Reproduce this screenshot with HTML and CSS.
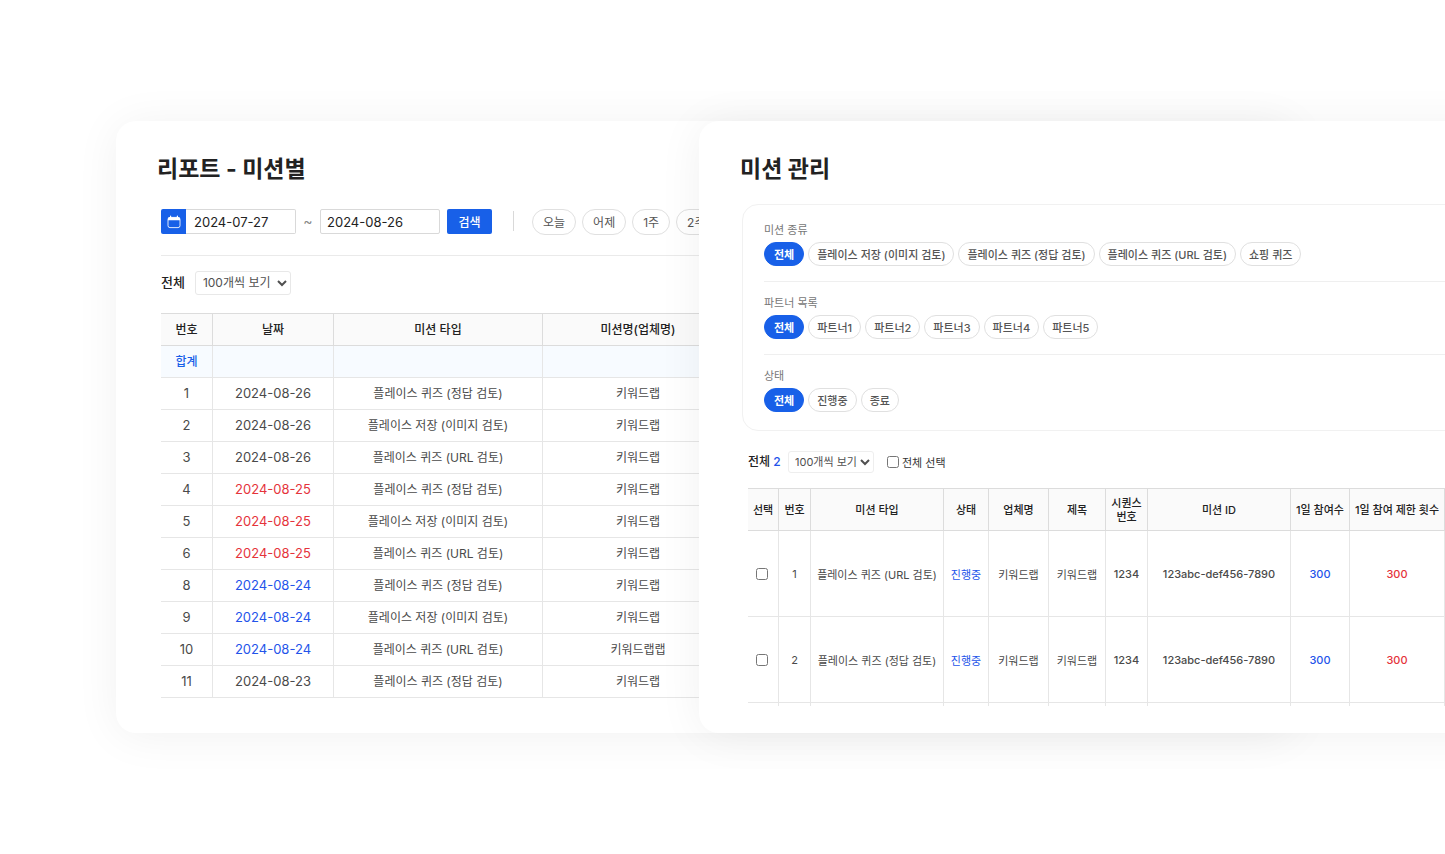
FILE: index.html
```html
<!DOCTYPE html>
<html lang="ko">
<head>
<meta charset="utf-8">
<meta name="viewport" content="width=device-width, initial-scale=1">
<title>리포트 / 미션 관리</title>
<link rel="stylesheet" href="styles.css">
</head>
<body>
<main class="stage">
  <section class="card card-report">
    <h1 class="card-title">리포트 - 미션별</h1>
    <div class="report-body">
      <form class="search-row">
        <div class="date-field">
          <button type="button" class="date-icon" aria-label="달력 열기">
            <svg width="14" height="14" viewBox="0 0 14 14" fill="none" aria-hidden="true">
              <path d="M1 5.2V3.6Q1 2.2 2.4 2.2H11.6Q13 2.2 13 3.6V5.2Z" fill="#fff"/>
              <path d="M3.6 1.2V2.6M10.4 1.2V2.6" stroke="#fff" stroke-width="1.2" stroke-linecap="round"/>
              <rect x="1" y="2.4" width="12" height="10.2" rx="2" stroke="#fff" stroke-opacity=".85"/>
            </svg>
          </button>
          <input type="text" class="date-input date-start" value="2024-07-27" aria-label="시작일">
        </div>
        <span class="tilde">~</span>
        <input type="text" class="date-input date-end" value="2024-08-26" aria-label="종료일">
        <button type="button" class="search-btn">검색</button>
        <span class="divider"></span>
        <div class="range-chips">
          <button type="button" class="chip chip-lg">오늘</button>
          <button type="button" class="chip chip-lg">어제</button>
          <button type="button" class="chip chip-lg">1주</button>
          <button type="button" class="chip chip-lg">2주</button>
        </div>
      </form>
      <div class="list-head">
        <label class="total" for="report-size">전체</label>
        <select id="report-size" class="page-size"><option>100개씩 보기</option></select>
      </div>
      <table class="grid report-grid">
        <colgroup><col class="r-no"><col class="r-date"><col class="r-type"><col class="r-name"></colgroup>
        <thead><tr><th>번호</th><th>날짜</th><th>미션 타입</th><th>미션명(업체명)</th></tr></thead>
        <tbody>
          <tr class="sum"><td>합계</td><td></td><td></td><td></td></tr>
          <tr><td class="num">1</td><td class="num">2024-08-26</td><td>플레이스 퀴즈 (정답 검토)</td><td>키워드랩</td></tr>
          <tr><td class="num">2</td><td class="num">2024-08-26</td><td>플레이스 저장 (이미지 검토)</td><td>키워드랩</td></tr>
          <tr><td class="num">3</td><td class="num">2024-08-26</td><td>플레이스 퀴즈 (URL 검토)</td><td>키워드랩</td></tr>
          <tr><td class="num">4</td><td class="num red">2024-08-25</td><td>플레이스 퀴즈 (정답 검토)</td><td>키워드랩</td></tr>
          <tr><td class="num">5</td><td class="num red">2024-08-25</td><td>플레이스 저장 (이미지 검토)</td><td>키워드랩</td></tr>
          <tr><td class="num">6</td><td class="num red">2024-08-25</td><td>플레이스 퀴즈 (URL 검토)</td><td>키워드랩</td></tr>
          <tr><td class="num">8</td><td class="num blue">2024-08-24</td><td>플레이스 퀴즈 (정답 검토)</td><td>키워드랩</td></tr>
          <tr><td class="num">9</td><td class="num blue">2024-08-24</td><td>플레이스 저장 (이미지 검토)</td><td>키워드랩</td></tr>
          <tr><td class="num">10</td><td class="num blue">2024-08-24</td><td>플레이스 퀴즈 (URL 검토)</td><td>키워드랩랩</td></tr>
          <tr><td class="num">11</td><td class="num">2024-08-23</td><td>플레이스 퀴즈 (정답 검토)</td><td>키워드랩</td></tr>
        </tbody>
      </table>
    </div>
  </section>

  <section class="card card-mission">
    <h1 class="card-title">미션 관리</h1>
    <div class="filter-panel">
      <div class="filter">
        <h2 class="filter-label">미션 종류</h2>
        <div class="chips">
          <button type="button" class="chip active">전체</button>
          <button type="button" class="chip">플레이스 저장 (이미지 검토)</button>
          <button type="button" class="chip">플레이스 퀴즈 (정답 검토)</button>
          <button type="button" class="chip">플레이스 퀴즈 (URL 검토)</button>
          <button type="button" class="chip">쇼핑 퀴즈</button>
        </div>
      </div>
      <div class="filter">
        <h2 class="filter-label">파트너 목록</h2>
        <div class="chips">
          <button type="button" class="chip active">전체</button>
          <button type="button" class="chip">파트너1</button>
          <button type="button" class="chip">파트너2</button>
          <button type="button" class="chip">파트너3</button>
          <button type="button" class="chip">파트너4</button>
          <button type="button" class="chip">파트너5</button>
        </div>
      </div>
      <div class="filter">
        <h2 class="filter-label">상태</h2>
        <div class="chips">
          <button type="button" class="chip active">전체</button>
          <button type="button" class="chip">진행중</button>
          <button type="button" class="chip">종료</button>
        </div>
      </div>
    </div>
    <div class="mission-body">
      <div class="mission-head">
        <label class="total-sm" for="mission-size">전체 <span class="blue">2</span></label>
        <select id="mission-size" class="page-size page-size-sm"><option>100개씩 보기</option></select>
        <label class="select-all"><input type="checkbox" class="check">전체 선택</label>
      </div>
      <table class="grid mission-grid">
        <colgroup><col class="m-check"><col class="m-no"><col class="m-type"><col class="m-state"><col class="m-name"><col class="m-title"><col class="m-seq"><col class="m-id"><col class="m-join"><col class="m-limit"></colgroup>
        <thead><tr><th>선택</th><th>번호</th><th>미션 타입</th><th>상태</th><th>업체명</th><th>제목</th><th>시퀀스<br>번호</th><th>미션 ID</th><th>1일 참여수</th><th>1일 참여 제한 횟수</th></tr></thead>
        <tbody>
          <tr><td class="pick"><input type="checkbox" class="check" aria-label="1번 선택"></td><td>1</td><td>플레이스 퀴즈 (URL 검토)</td><td class="blue">진행중</td><td>키워드랩</td><td>키워드랩</td><td class="code">1234</td><td class="code">123abc-def456-7890</td><td class="blue strong">300</td><td class="red strong">300</td></tr>
          <tr><td class="pick"><input type="checkbox" class="check" aria-label="2번 선택"></td><td>2</td><td>플레이스 퀴즈 (정답 검토)</td><td class="blue">진행중</td><td>키워드랩</td><td>키워드랩</td><td class="code">1234</td><td class="code">123abc-def456-7890</td><td class="blue strong">300</td><td class="red strong">300</td></tr>
          <tr class="peek" aria-hidden="true"><td></td><td></td><td></td><td></td><td></td><td></td><td></td><td></td><td></td><td></td></tr>
        </tbody>
      </table>
    </div>
  </section>
</main>
</body>
</html>
```
FILE: styles.css
```css
* { box-sizing: border-box; }

body {
  margin: 0;
  background: #fff;
  color: #222;
  font-family: Inter, "Noto Sans CJK KR", sans-serif;
  font-size: 12px;
}

button, input, select { font: inherit; margin: 0; }

/* Two overlapping cards share one grid row */
.stage {
  display: grid;
  grid-template-columns: 116px 583px minmax(0, 1fr) 150px;
  align-items: start;
  padding: 121px 0;
  overflow: hidden;
}

.card {
  grid-row: 1;
  min-width: 0;
  padding-top: 28px;
  background: #fff;
  border-radius: 20px;
  box-shadow: 0 3px 46px rgba(0, 0, 0, .06);
}

.card-report { grid-column: 2 / 4; padding-bottom: 35px; }

.card-mission {
  grid-column: 3 / 5;
  z-index: 1;
  margin-right: -100px;
  padding-bottom: 27px;
}

.card-title {
  margin: 0 0 0 41px;
  font-size: 23px;
  line-height: 40px;
  font-weight: 700;
}

.blue { color: #2354ea; }
.red { color: #e5333b; }

/* Report card */
.report-body { margin: 20px 45px 0; }

.search-row {
  display: flex;
  align-items: flex-start;
  padding-bottom: 20px;
  border-bottom: 1px solid #eaeaea;
  white-space: nowrap;
}

.date-field { display: flex; width: 135px; }

.date-icon {
  display: grid;
  place-items: center;
  flex: 0 0 25px;
  height: 25px;
  padding: 0;
  border: 0;
  border-radius: 2px 0 0 2px;
  background: #1860e8;
}

.date-input {
  height: 25px;
  min-width: 0;
  padding: 0 7px;
  border: 1px solid #d9d9d9;
  border-radius: 2px;
  background: #fff;
  color: #222;
  font-size: 13px;
}

.date-start { flex: 1; border-left: 0; border-radius: 0 2px 2px 0; padding-left: 8px; }
.date-end { width: 120px; padding-left: 6px; }

.tilde { width: 24px; text-align: center; color: #888; font-size: 14px; line-height: 24px; }

.search-btn {
  width: 45px;
  height: 25px;
  margin-left: 7px;
  padding: 0 0 1px;
  border: 0;
  border-radius: 2px;
  background: #1860e8;
  color: #fff;
  font-weight: 500;
}

.divider { width: 1px; height: 20px; margin: 2px 18px 0 21px; background: #d9d9d9; }

.range-chips { display: flex; gap: 6px; }
.chips { display: flex; gap: 4px; }

.chip {
  height: 24px;
  padding: 0 8px;
  border: 1px solid #e0e0e0;
  border-radius: 13px;
  background: #fff;
  color: #555;
  font-size: 11px;
  font-weight: 500;
  white-space: nowrap;
}

.chip-lg { height: 26px; padding: 0 10px 1px; font-size: 12px; font-weight: 400; }
.chip.active { padding: 0 9px; border-color: #1860e8; background: #1860e8; color: #fff; font-weight: 700; }

.list-head { display: flex; align-items: center; gap: 10px; margin: 15px 0 18px; }
.total { font-size: 13px; line-height: 24px; font-weight: 500; padding-bottom: 2px; height: 24px; line-height: 22px; }

.page-size {
  width: 96px;
  height: 24px;
  padding: 0 0 1px 3px;
  border: 1px solid #e8e8e8;
  border-radius: 3px;
  background: #fff;
  color: #505050;
}

.grid { table-layout: fixed; border-collapse: separate; border-spacing: 0; }

.grid th, .grid td {
  padding: 0;
  border-right: 1px solid #e6e6e6;
  border-bottom: 1px solid #e6e6e6;
  text-align: center;
  white-space: nowrap;
  color: #4a4a4a;
}

.grid th {
  border-top: 1px solid #ddd;
  border-color: #dcdcdc;
  background: #fafafa;
  color: #222;
  font-weight: 500;
}

.report-grid { width: 573px; }
.report-grid th { height: 33px; padding-bottom: 2px; }
.report-grid td { height: 32px; padding-bottom: 2px; }
.report-grid .num { font-size: 13px; }
.grid .red { color: #e5333b; }
.grid .blue { color: #2354ea; }
.report-grid .sum td { background: #f7fbff; color: #1860e8; font-weight: 500; }
.r-no { width: 52px; }
.r-date { width: 121px; }
.r-type { width: 209px; }
.r-name { width: 191px; }

/* Mission card */
.filter-panel {
  margin: 15px 0 0 43px;
  padding: 4px 21px 3px;
  border: 1px solid #f1f1f1;
  border-radius: 16px;
}

.filter { padding: 12px 0 15px; }
.filter + .filter { border-top: 1px solid #efefef; }

.filter-label {
  margin: 0 0 4px;
  padding-top: 1px;
  color: #777;
  font-size: 11px;
  line-height: 16px;
  font-weight: 400;
}

.mission-body { margin: 20px 0 0 49px; font-size: 11px; }
.mission-head { display: flex; align-items: center; height: 22px; margin-bottom: 15px; }
.total-sm { width: 40px; padding-bottom: 3px; font-size: 12px; font-weight: 500; white-space: nowrap; }
.page-size-sm { width: 86px; height: 22px; padding: 0 0 0 2px; border-color: #eee; }
.select-all { display: flex; align-items: center; gap: 3px; margin-left: 13px; color: #333; }
.check { width: 12px; height: 12px; }

.mission-grid { width: 697px; }
.mission-grid th { height: 43px; line-height: 14px; }
.mission-grid td { height: 86px; }
.mission-grid .pick { padding-right: 2px; }
.mission-grid .check { display: block; margin: 0 auto; }
.mission-grid .code, .mission-grid .strong { font-weight: 500; }
.mission-grid .peek td { height: 3px; border-bottom: 0; }
.m-check { width: 31px; }
.m-no { width: 32px; }
.m-type { width: 133px; }
.m-state { width: 45px; }
.m-name { width: 60px; }
.m-title { width: 57px; }
.m-seq { width: 42px; }
.m-id { width: 143px; }
.m-join { width: 59px; }
.m-limit { width: 95px; }
```
